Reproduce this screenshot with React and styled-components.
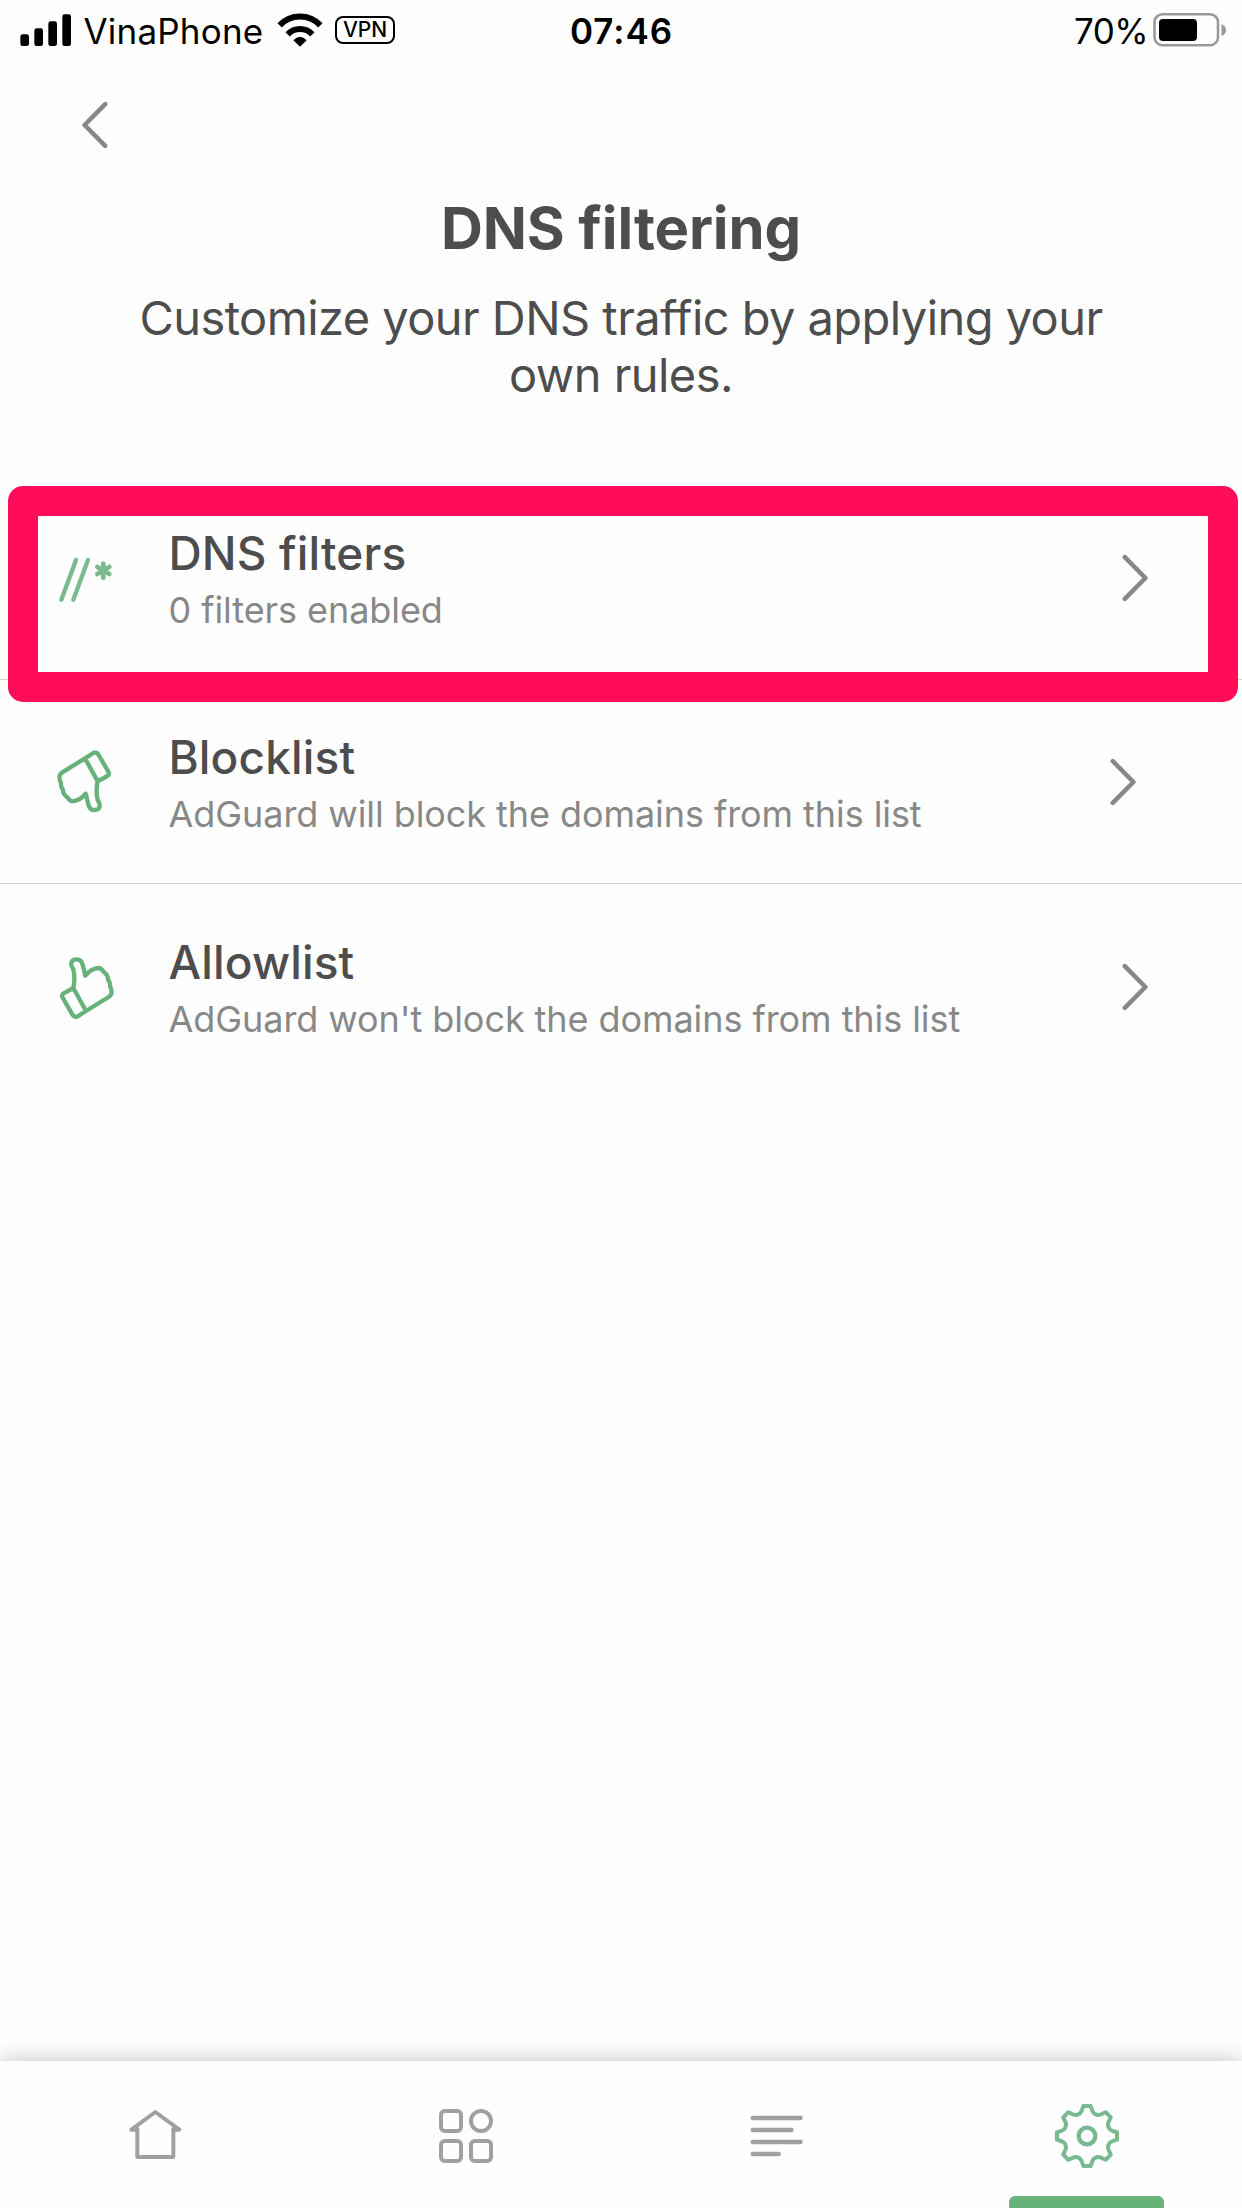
import React from "react";
import styled, { createGlobalStyle } from "styled-components";

const GlobalStyle = createGlobalStyle`
  *, *::before, *::after { box-sizing: border-box; }
  body { margin: 0; background: #fefefe; }
`;

const Screen = styled.div`
  display: flex;
  flex-direction: column;
  width: 1242px;
  height: 2208px;
  overflow: hidden;
  background: #fefefe;
  color: #4d4d4d;
  font-family: Inter, "Liberation Sans", sans-serif;
`;

const StatusBar = styled.header`
  display: grid;
  grid-template-columns: 1fr auto 1fr;
  align-items: center;
  height: 62px;
  padding: 0 16px 0 20px;
  color: #000;
  font-size: 35px;
  line-height: 44px;
`;

const StatusGroup = styled.div`
  display: flex;
  align-items: center;
  justify-content: ${(p) => (p.$end ? "flex-end" : "flex-start")};
`;

const SignalIcon = styled.svg`
  width: 52px;
  height: 34px;
  margin: 0 11.5px 2px 0;
`;

const Carrier = styled.span`
  width: 179.5px;
  white-space: nowrap;
  letter-spacing: 0.2px;
`;

const WifiIcon = styled.svg`
  width: 46px;
  height: 34px;
  margin: 0 12px 3px 14px;
`;

const VpnBadge = styled.span`
  display: flex;
  align-items: center;
  justify-content: center;
  width: 60px;
  height: 28px;
  margin-bottom: 2px;
  border: 2px solid #000;
  border-radius: 8px;
  font-size: 21px;
  font-weight: 500;
  line-height: 24px;
`;

const Clock = styled.time`
  margin-right: 3px;
  font-weight: 600;
  letter-spacing: 1px;
`;

const Charge = styled.span`
  letter-spacing: -0.6px;
`;

const BatteryIcon = styled.svg`
  width: 74px;
  height: 36px;
  margin: 0 0 2px 4px;
`;

const BackBar = styled.nav`
  display: flex;
  align-items: flex-start;
  height: 131px;
  padding: 38px 0 0 81.5px;
`;

const BackButton = styled.button`
  display: flex;
  padding: 0;
  border: 0;
  background: none;
`;

const Intro = styled.section`
  display: flex;
  flex-direction: column;
  align-items: center;
  gap: 27px;
  height: 282px;
  text-align: center;
`;

const Title = styled.h1`
  margin: 0;
  font-size: 58px;
  font-weight: 700;
  line-height: 70px;
  letter-spacing: -0.1px;
`;

const Description = styled.p`
  width: 1000px;
  margin: 0;
  font-size: 47px;
  line-height: 56.5px;
  letter-spacing: -0.56px;
`;

const List = styled.main`
  flex: 1;
`;

const Row = styled.div`
  position: relative;
  display: flex;
  align-items: center;
  height: ${(p) => (p.$marked ? 205 : 204)}px;
  padding: 0 ${(p) => p.$inset}px 0 50px;
  border-bottom: ${(p) => (p.$last ? "0" : "1px solid #d6d6d6")};
`;

const RowIcon = styled.svg`
  flex: none;
  width: 70px;
  height: 80px;
  fill: none;
  stroke: ${(p) => p.$color};
  stroke-width: ${(p) => p.$weight};
  stroke-linecap: round;
  stroke-linejoin: round;
`;

const RowText = styled.div`
  display: flex;
  flex: 1;
  flex-direction: column;
  gap: 7px;
  padding: 0 0 0 48.5px;
  margin-top: 2px;
  white-space: nowrap;
`;

const RowTitle = styled.h2`
  margin: 0;
  font-size: 46px;
  font-weight: 500;
  line-height: 56px;
  letter-spacing: 0.15px;
`;

const RowNote = styled.p`
  margin: 0;
  color: #888;
  font-size: 36px;
  line-height: 44px;
  letter-spacing: -0.07px;
`;

const ChevronIcon = styled.svg`
  width: 26px;
  height: 48px;
  margin-top: 1px;
  fill: none;
  stroke: #888;
  stroke-width: 4.6;
  stroke-linecap: round;
  stroke-linejoin: round;
  transform: ${(p) => (p.$back ? "scaleX(-1)" : "none")};
`;

const Highlight = styled.div`
  position: absolute;
  z-index: 1;
  top: 10.5px;
  left: 8px;
  width: 1230px;
  height: 216.5px;
  border: 30px solid #ff0d59;
  border-radius: 15px;
  pointer-events: none;
`;

const TabBar = styled.footer`
  display: grid;
  grid-template-columns: repeat(4, 1fr);
  height: 147px;
  background: #fefefe;
  box-shadow: 0 0 22px rgba(0, 0, 0, 0.24);
`;

const Tab = styled.div`
  display: flex;
  flex-direction: column;
  align-items: center;
  justify-content: space-between;
  padding-top: 40px;
`;

const TabIcon = styled.svg`
  width: 70px;
  height: 70px;
  fill: none;
  stroke: ${(p) => (p.$active ? "#79b990" : "#a0a0a0")};
  stroke-width: 12;
  stroke-linecap: round;
  stroke-linejoin: round;
`;

const Indicator = styled.div`
  width: 155px;
  height: 12px;
  border-radius: 6px 6px 0 0;
  background: #67b279;
`;

function Chevron({ back }) {
  return (
    <ChevronIcon $back={back} viewBox="0 0 26 48">
      <path d="M2.8 3.2L23.4 24L2.8 44.8" />
    </ChevronIcon>
  );
}

const THUMB =
  "M130 803L101 819Q93 824 98 832L127 882Q133 893 143 888L168 872L130 803" +
  "C134 785 134 765 130 747C119 731 123 716 141 717C159 717 158 738 166 766" +
  "Q184 744 206 743Q215 744 221 755Q235 764 234 778Q242 786 240 799" +
  "Q246 806 244 821Q242 826 236 830L168 872";

function FiltersIcon() {
  return (
    <RowIcon $color="#79bb8f" $weight={13} viewBox="150 201 210 240">
      <path d="M228 270L184 389M264 270L220 389" />
      <path strokeWidth="14" d="M310 281V323M292 291L328 312M292 312L328 291" />
    </RowIcon>
  );
}

function BlockIcon() {
  return (
    <RowIcon $color="#67b27b" $weight={13} viewBox="60 64 210 240">
      <path transform="rotate(180 166.5 492.5)" d={THUMB} />
    </RowIcon>
  );
}

function AllowIcon() {
  return (
    <RowIcon $color="#67b27b" $weight={13} viewBox="60 677 210 240">
      <path d={THUMB} />
    </RowIcon>
  );
}

function turn(x, y, step) {
  const a = (step * Math.PI) / 4;
  const c = Math.cos(a);
  const s = Math.sin(a);
  return `${(x * c - y * s).toFixed(1)} ${(x * s + y * c).toFixed(1)}`;
}

const GEAR =
  Array.from({ length: 8 }, (_, i) => {
    const p = (x, y) => turn(x, y, i);
    return (
      `${i ? "L" : "M"}${p(-11, -90)}L${p(11, -90)}` +
      `C${p(15, -78)} ${p(17, -70)} ${p(22, -67)}L${p(31.8, -62.9)}` +
      `C${p(37.5, -61.5)} ${p(44.5, -65.8)} ${p(55.9, -71.4)}`
    );
  }).join("") + "Z";

const rows = [
  { title: "DNS filters", note: "0 filters enabled", Icon: FiltersIcon, inset: 94, marked: true },
  { title: "Blocklist", note: "AdGuard will block the domains from this list", Icon: BlockIcon, inset: 106 },
  { title: "Allowlist", note: "AdGuard won't block the domains from this list", Icon: AllowIcon, inset: 94 },
];

export default function App() {
  return (
    <Screen>
      <GlobalStyle />
      <StatusBar>
        <StatusGroup>
          <SignalIcon viewBox="60 38 156 102">
            <rect x="61" y="102" width="26" height="35" rx="7" />
            <rect x="103" y="84" width="26" height="53" rx="7" />
            <rect x="145" y="63" width="26" height="74" rx="7" />
            <rect x="187" y="42" width="26" height="95" rx="7" />
          </SignalIcon>
          <Carrier>VinaPhone</Carrier>
          <WifiIcon viewBox="831 37 138 102">
            <path d="M839 74A84 84 0 0 1 961 74" fill="none" stroke="#000" strokeWidth="18" />
            <path d="M863 101A51 51 0 0 1 937 101" fill="none" stroke="#000" strokeWidth="18" />
            <path d="M880 119Q900 98 920 119L900 138Z" />
          </WifiIcon>
          <VpnBadge>VPN</VpnBadge>
        </StatusGroup>
        <Clock>07:46</Clock>
        <StatusGroup $end>
          <Charge>70%</Charge>
          <BatteryIcon viewBox="1153 12 74 36">
            <rect x="1155.5" y="14.2" width="63.5" height="31" rx="8" fill="none" stroke="#999" strokeWidth="2.6" />
            <rect x="1160" y="19" width="38" height="22" rx="4" />
            <path d="M1222.5 24Q1227 26 1227 30T1222.5 36Z" fill="#999" />
          </BatteryIcon>
        </StatusGroup>
      </StatusBar>
      <BackBar>
        <BackButton aria-label="Back">
          <Chevron back />
        </BackButton>
      </BackBar>
      <Intro>
        <Title>DNS filtering</Title>
        <Description>Customize your DNS traffic by applying your own rules.</Description>
      </Intro>
      <List>
        {rows.map(({ title, note, Icon, inset, marked }, i) => (
          <Row key={title} $inset={inset} $marked={marked} $last={i === rows.length - 1}>
            <Icon />
            <RowText>
              <RowTitle>{title}</RowTitle>
              <RowNote>{note}</RowNote>
            </RowText>
            <Chevron />
            {marked && <Highlight />}
          </Row>
        ))}
      </List>
      <TabBar>
        <Tab>
          <TabIcon viewBox="62 183 210 210">
            <path d="M114 269H96L168 216L240 269H222M114 267V351H222V267" />
          </TabIcon>
        </Tab>
        <Tab>
          <TabIcon viewBox="993 183 210 210">
            <rect x="1023" y="213" width="60" height="60" rx="11" />
            <circle cx="1143" cy="243" r="30" />
            <rect x="1023" y="303" width="60" height="60" rx="11" />
            <rect x="1113" y="303" width="60" height="60" rx="11" />
          </TabIcon>
        </Tab>
        <Tab>
          <TabIcon viewBox="64 183 210 210">
            <path strokeWidth="13" d="M99 234H243M99 270H216M99 306H243M99 342H177" />
          </TabIcon>
        </Tab>
        <Tab>
          <TabIcon $active viewBox="-105 -105 210 210">
            <path d={GEAR} />
            <circle r="25" strokeWidth="13" />
          </TabIcon>
          <Indicator />
        </Tab>
      </TabBar>
    </Screen>
  );
}
